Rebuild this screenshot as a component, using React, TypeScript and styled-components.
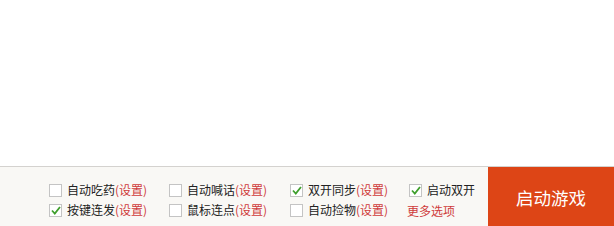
import React from 'react';
import styled, { createGlobalStyle } from 'styled-components';

const Global = createGlobalStyle`
  html, body { margin: 0; padding: 0; background: #fff; }
  body { font-family: "Noto Sans CJK SC", "Microsoft YaHei", sans-serif; }
`;

const Page = styled.div`
  width: 614px;
  height: 226px;
  display: flex;
  flex-direction: column;
  overflow: hidden;
`;

const Blank = styled.div`
  height: 166px;
  background: #fff;
`;

const Bar = styled.div`
  flex: 1;
  display: flex;
  border-top: 1px solid #d4d2cf;
  background: #f9f8f5;
`;

const Options = styled.div`
  flex: 1;
  display: grid;
  grid-template-columns: 120px 121px 119px 79px;
  grid-auto-rows: 20px;
  align-content: start;
  padding: 13px 0 0 49px;
`;

const Option = styled.label`
  display: flex;
  align-items: center;
  gap: 5px;
  font-size: 12px;
  line-height: 16px;
  color: #222;
  white-space: nowrap;
  cursor: pointer;
`;

const Box = styled.span`
  width: 11px;
  height: 11px;
  border: 1px solid #c4c4c4;
  background: #fff;
  display: flex;
  align-items: center;
  justify-content: center;
  flex-shrink: 0;
`;

const Setting = styled.span`
  color: #cf3b3b;
`;

const More = styled.a`
  font-size: 12px;
  color: #cf3b3b;
  display: flex;
  align-items: center;
  margin-left: -2px;
  text-decoration: none;
`;

const Launch = styled.button`
  width: 126px;
  border: 0;
  background: #dd4516;
  color: #fff;
  font-family: "Noto Sans CJK SC", sans-serif;
  font-size: 17.5px;
  padding: 2px 0 0;
  cursor: pointer;
`;

function Check({ checked }: { checked?: boolean }) {
  return (
    <Box>
      {checked && (
        <svg width="10" height="9" viewBox="0 0 10 9">
          <path d="M1 4.5 L3.8 7.5 L9 1" fill="none" stroke="#3f9f2c" strokeWidth="1.8" />
        </svg>
      )}
    </Box>
  );
}

const items: { label: string; checked?: boolean; setting?: boolean; more?: boolean }[] = [
  { label: '自动吃药', setting: true },
  { label: '自动喊话', setting: true },
  { label: '双开同步', checked: true, setting: true },
  { label: '启动双开', checked: true },
  { label: '按键连发', checked: true, setting: true },
  { label: '鼠标连点', setting: true },
  { label: '自动捡物', setting: true },
  { label: '更多选项', more: true },
];

export default function App() {
  return (
    <Page>
      <Global />
      <Blank />
      <Bar>
        <Options>
          {items.map((it) =>
            it.more ? (
              <More key={it.label} href="#">{it.label}</More>
            ) : (
              <Option key={it.label}>
                <Check checked={it.checked} />
                <span>
                  {it.label}
                  {it.setting && <Setting>(设置)</Setting>}
                </span>
              </Option>
            )
          )}
        </Options>
        <Launch>启动游戏</Launch>
      </Bar>
    </Page>
  );
}
